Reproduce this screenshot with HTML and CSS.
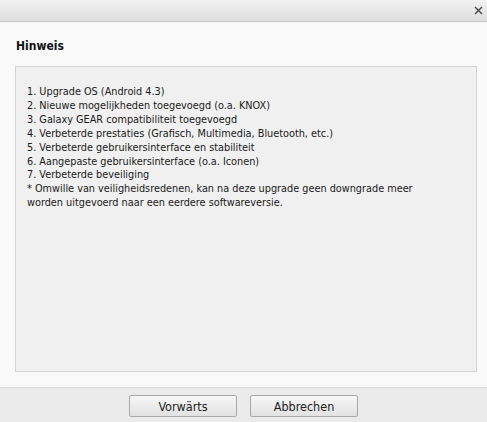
FILE: index.html
```html
<!DOCTYPE html>
<html lang="nl">
<head>
    <meta charset="UTF-8">
    <title>Hinweis</title>
    <link rel="stylesheet" href="styles.css">
</head>
<body>
    <div class="dialog">
        <div class="titlebar">
            <span class="close" title="Schließen">
                <svg width="9" height="9" viewBox="0 0 9 9"><path d="M1 1L8 8M8 1L1 8" stroke="#444" stroke-width="1.4"/></svg>
            </span>
        </div>
        <div class="content">
            <h3 class="heading">Hinweis</h3>
            <div class="notes">
                1. Upgrade OS (Android 4.3)<br>
                2. Nieuwe mogelijkheden toegevoegd (o.a. KNOX)<br>
                3. Galaxy GEAR compatibiliteit toegevoegd<br>
                4. Verbeterde prestaties (Grafisch, Multimedia, Bluetooth, etc.)<br>
                5. Verbeterde gebruikersinterface en stabiliteit<br>
                6. Aangepaste gebruikersinterface (o.a. Iconen)<br>
                7. Verbeterde beveiliging<br>
                * Omwille van veiligheidsredenen, kan na deze upgrade geen downgrade meer worden uitgevoerd naar een eerdere softwareversie.
            </div>
        </div>
        <div class="footer">
            <button class="btn">Vorwärts</button>
            <button class="btn">Abbrechen</button>
        </div>
    </div>
</body>
</html>
```

FILE: styles.css
```css
html, body {
    margin: 0;
    height: 100%;
}
body {
    font-family: "DejaVu Sans Condensed", "DejaVu Sans", Verdana, sans-serif;
    font-stretch: condensed;
    font-size: 11px;
    color: #222;
    background: #f9f9f9;
}
.dialog {
    display: flex;
    flex-direction: column;
    height: 422px;
}
.titlebar {
    height: 21px;
    background: linear-gradient(#f2f2f2, #dedede);
    border-bottom: 1px solid #c9c9c9;
    display: flex;
    justify-content: flex-end;
    align-items: center;
    padding-right: 4px;
}
.close {
    display: flex;
    width: 9px;
    height: 9px;
}
.content {
    flex: 1;
    padding: 16px 10px 15px 15px;
    display: flex;
    flex-direction: column;
}
.heading {
    margin: 0 0 12px 1px;
    font-size: 12px;
    font-weight: bold;
    color: #111;
    line-height: 16px;
}
.notes {
    flex: 1;
    background: #f0f0f0;
    border: 1px solid #d4d4d4;
    padding: 18px 50px 10px 11px;
    line-height: 13.9px;
    font-size: 10.8px;
    color: #1a1a1a;
}
.footer {
    height: 35px;
    border-top: 1px solid #d8d8d8;
    background: #ebebeb;
    display: flex;
    justify-content: center;
    align-items: flex-start;
    gap: 13px;
    padding-top: 7px;
    box-sizing: border-box;
}
.btn {
    width: 108px;
    height: 22px;
    font-family: inherit;
    font-size: 12.5px;
    color: #222;
    background: linear-gradient(#f6f6f6, #e2e2e2);
    border: 1px solid #a9a9a9;
    border-radius: 2px;
    padding: 0;
}
```
